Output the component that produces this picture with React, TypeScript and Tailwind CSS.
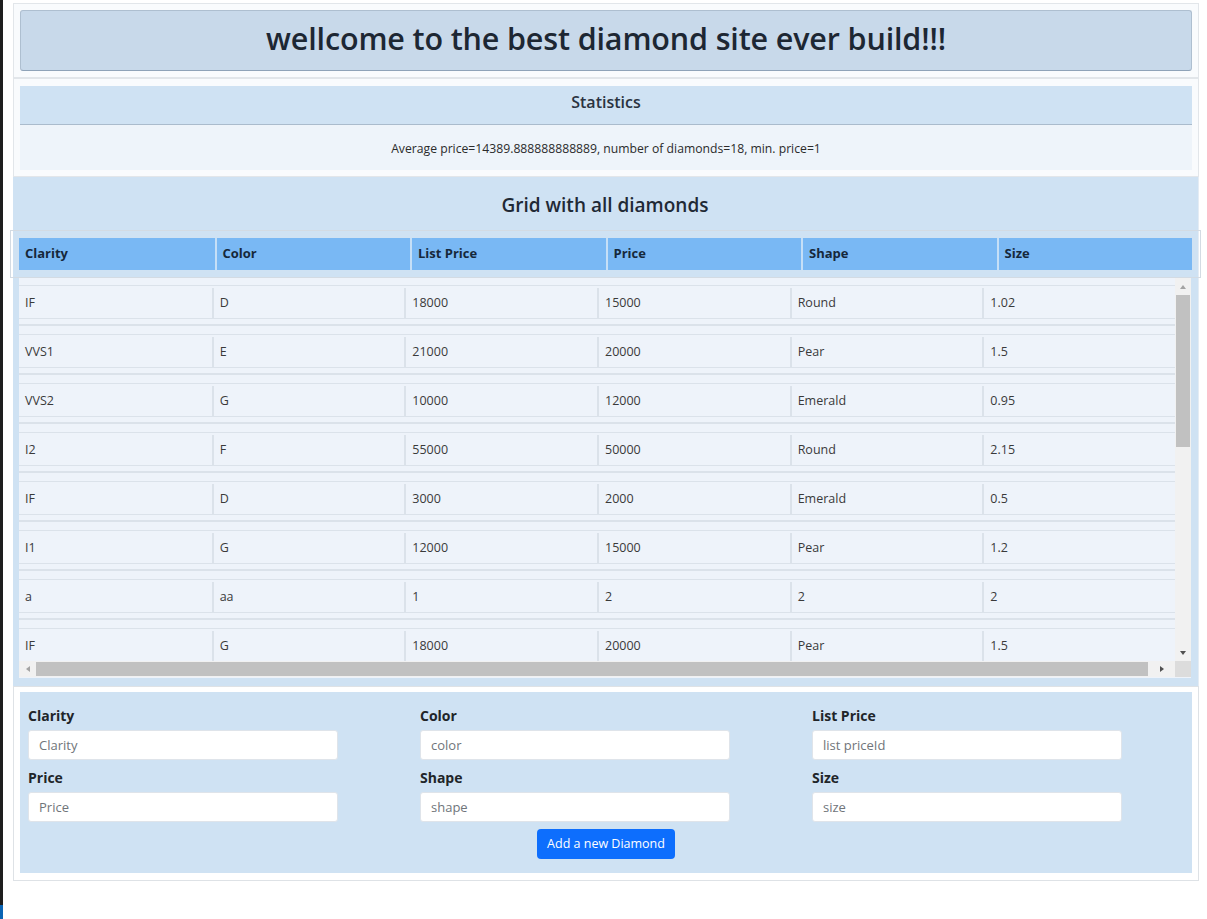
const diamonds = [
  ['IF', 'D', '18000', '15000', 'Round', '1.02'],
  ['VVS1', 'E', '21000', '20000', 'Pear', '1.5'],
  ['VVS2', 'G', '10000', '12000', 'Emerald', '0.95'],
  ['I2', 'F', '55000', '50000', 'Round', '2.15'],
  ['IF', 'D', '3000', '2000', 'Emerald', '0.5'],
  ['I1', 'G', '12000', '15000', 'Pear', '1.2'],
  ['a', 'aa', '1', '2', '2', '2'],
  ['IF', 'G', '18000', '20000', 'Pear', '1.5'],
];

const columns = ['Clarity', 'Color', 'List Price', 'Price', 'Shape', 'Size'];

function Arrow({ dir, dark }: { dir: 'up' | 'down' | 'left' | 'right'; dark?: boolean }) {
  const pts = {
    up: '1,6 4,2 7,6',
    down: '1,2 4,6 7,2',
    left: '6,1 2,4 6,7',
    right: '2,1 6,4 2,7',
  }[dir];
  return (
    <svg width="8" height="8" viewBox="0 0 8 8">
      <polygon points={pts} fill={dark ? '#505050' : '#a3a3a3'} />
    </svg>
  );
}

function Field({ label, placeholder }: { label: string; placeholder: string }) {
  return (
    <div className="flex flex-col">
      <label className="h-[21px] mb-[4px] text-[14px] leading-[21px] font-bold text-[#212529]">{label}</label>
      <input
        placeholder={placeholder}
        className="w-[310px] h-[30px] mb-[7px] px-[10px] bg-white border border-[#dfe4ea] rounded-[3px] text-[13px] text-[#212529] placeholder:text-[#70757a] outline-none"
      />
    </div>
  );
}

export default function App() {
  return (
    <div className="flex min-h-[919px] bg-white font-['Open_Sans',sans-serif]">
      <div className="w-[3px] flex flex-col justify-end bg-[#1e1e1e]">
        <div className="h-[14px] bg-[#0a64b4]" />
      </div>
      <div className="ml-[10px] w-[1186px] pt-[3px]">
        {/* title */}
        <div className="border border-[#e2e6ea] bg-[#f9fbfd] px-[6px] pt-[6px] pb-[6px]">
          <div className="h-[61px] flex items-center justify-center pb-[3px] bg-[#c8d9ea] border border-[#aebfd0] border-b-[#8fa3b8] rounded-[3px]">
            <h1 className="text-[30.5px] font-semibold text-[#1d2733] tracking-[-0.15px]">wellcome to the best diamond site ever build!!!</h1>
          </div>
        </div>

        {/* statistics */}
        <div className="border border-[#e2e6ea] bg-[#f9fbfd] px-[6px] pt-[7px] pb-[6px]">
          <div className="h-[39px] flex items-center justify-center pb-[6px] bg-[#cfe2f3] border-b border-[#aabbcc]">
            <span className="text-[16px] font-semibold text-[#2a3340]">Statistics</span>
          </div>
          <div className="h-[45px] flex items-center justify-center pt-[3px] bg-[#eef4fa]">
            <span className="text-[12.2px] text-[#2b2b2b]">Average price=14389.888888888889, number of diamonds=18, min. price=1</span>
          </div>
        </div>

        {/* grid */}
        <div className="bg-[#cfe2f3] pl-[6px] pr-[7px] pb-[8px] border-r border-[#e4ecf4]">
          <div className="h-[53px] pt-[14px] text-center text-[19px] font-semibold text-[#1f2935]">Grid with all diamonds</div>
          <div className="-ml-[9px] -mr-[10px] border border-[#d3dbe3] px-[8px] py-[7px]">
            <div className="grid grid-cols-6 h-[32px] bg-[#79b8f4]">
              {columns.map((c, i) => (
                <div key={c} className={`flex items-center pl-[6px] text-[13px] font-bold text-[#16283b] ${i > 0 ? 'border-l-2 border-[#c5dff7]' : ''}`}>
                  {c}
                </div>
              ))}
            </div>
          </div>
          <div className="flex flex-col h-[400px] bg-[#eef3fa]">
            <div className="flex h-[383px]">
              <div className="flex-1 overflow-hidden pt-[7px]">
                {diamonds.map((row, r) => (
                  <div key={r}>
                    <div className="grid grid-cols-6 h-[34px] pt-[2px] border-y border-[#dbe2ea]">
                      {row.map((v, i) => (
                        <div key={i} className={`flex items-center pl-[6px] text-[12.5px] text-[#3a3a3a] ${i > 0 ? 'border-l-2 border-[#dbe2ea]' : ''}`}>
                          {v}
                        </div>
                      ))}
                    </div>
                    <div className="h-[5px]" />
                    <div className="h-[2px] bg-[#dbe2ea]" />
                    <div className="h-[8px]" />
                  </div>
                ))}
              </div>
              <div className="w-[16px] flex flex-col items-center bg-[#f1f1f1]">
                <div className="h-[17px] flex items-center justify-center">
                  <Arrow dir="up" />
                </div>
                <div className="w-[14px] h-[152px] bg-[#c1c1c1]" />
                <div className="flex-1" />
                <div className="h-[17px] flex items-center justify-center">
                  <Arrow dir="down" dark />
                </div>
              </div>
            </div>
            <div className="flex h-[16px]">
              <div className="flex-1 flex items-center bg-[#f1f1f1]">
                <div className="w-[17px] flex justify-center">
                  <Arrow dir="left" />
                </div>
                <div className="w-[1112px] h-[14px] bg-[#c1c1c1]" />
                <div className="flex-1 flex justify-center">
                  <Arrow dir="right" dark />
                </div>
              </div>
              <div className="w-[16px] bg-[#dcdcdc]" />
            </div>
          </div>
        </div>

        {/* form */}
        <div className="border border-[#dee2e6] bg-white px-[6px] pt-[5px] pb-[7px]">
          <div className="bg-[#cfe2f3] pl-[8px] pt-[13px] pb-[14px]">
            <div className="grid grid-cols-[392px_392px_1fr]">
              <Field label="Clarity" placeholder="Clarity" />
              <Field label="Color" placeholder="color" />
              <Field label="List Price" placeholder="list priceId" />
              <Field label="Price" placeholder="Price" />
              <Field label="Shape" placeholder="shape" />
              <Field label="Size" placeholder="size" />
            </div>
            <div className="flex justify-center pr-[8px]">
              <button className="h-[30px] px-[10px] bg-[#0d6efd] text-white text-[12.5px] rounded-[4px]">Add a new Diamond</button>
            </div>
          </div>
        </div>
      </div>
    </div>
  );
}
